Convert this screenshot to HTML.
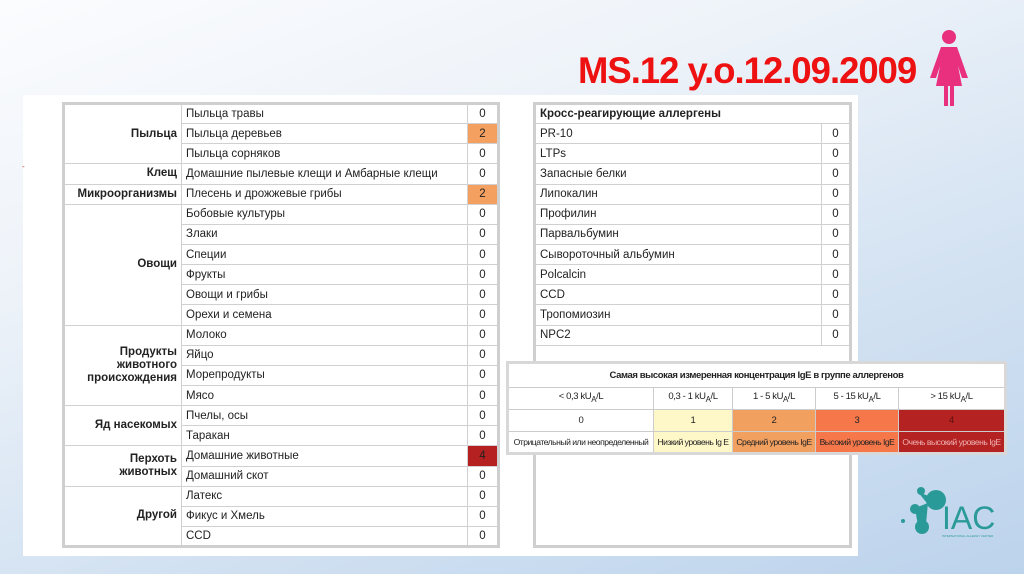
<!DOCTYPE html>
<html><head><meta charset="utf-8"><style>
*{margin:0;padding:0;box-sizing:border-box}
body{width:1024px;height:574px;overflow:hidden;position:relative;font-family:"Liberation Sans",sans-serif;background:linear-gradient(160deg,#fbfcfe 0%,#eef3f9 30%,#d3e2f2 65%,#bcd3ec 100%)}
.panel{position:absolute;left:23px;top:95px;width:835px;height:461px;background:#fff}
.title{position:absolute;left:578px;top:50px;font-weight:bold;font-size:37px;color:#ee1111;letter-spacing:-1px;transform:scaleX(0.985);transform-origin:left top;white-space:nowrap}
table{border-collapse:collapse;position:absolute;font-size:11.5px;color:#222}
td{border:1px solid #d0d0d0;height:20.15px;padding:0 4px;white-space:nowrap;line-height:18px}
.L{left:62px;top:102px;border:3px solid #cfcfcf}
.c{text-align:right;font-weight:bold;line-height:13px}
.v{text-align:center}
.o{background:#f4a060}
.r{background:#b52020}
.R{left:533px;top:102px;border:3px solid #cfcfcf}
.G{left:506px;top:361px;width:500px;table-layout:fixed;border:3px solid #d8d8d8;font-size:9.5px;letter-spacing:-0.4px}
.G td{text-align:center;height:22px;padding:0;border-color:#ccc;overflow:hidden}
.G tr:last-child td{font-size:8.6px;letter-spacing:-0.5px}
</style></head><body>
<div class="panel"></div>
<div style="position:absolute;left:22px;top:162px;color:#c33;font-size:8px">-</div>
<div class="title">MS.12 y.o.12.09.2009</div>
<svg style="position:absolute;left:928px;top:28px" width="42" height="80" viewBox="0 0 42 80">
<circle cx="21" cy="9" r="7" fill="#e8307f"/>
<path d="M13 19 H29 L40 50 H34 L30 38 L34 58 H26 V78 H22 V58 H20 V78 H16 V58 H8 L12 38 L8 50 H2 Z" fill="#e8307f"/>
</svg>
<table class="L">
<colgroup><col style="width:118px"><col style="width:286px"><col style="width:31px"></colgroup>
<tr><td rowspan="3" class="c">Пыльца</td><td>Пыльца травы</td><td class="v">0</td></tr>
<tr><td>Пыльца деревьев</td><td class="v o">2</td></tr>
<tr><td>Пыльца сорняков</td><td class="v">0</td></tr>
<tr><td class="c">Клещ</td><td>Домашние пылевые клещи и Амбарные клещи</td><td class="v">0</td></tr>
<tr><td class="c">Микроорганизмы</td><td>Плесень и дрожжевые грибы</td><td class="v o">2</td></tr>
<tr><td rowspan="6" class="c">Овощи</td><td>Бобовые культуры</td><td class="v">0</td></tr>
<tr><td>Злаки</td><td class="v">0</td></tr>
<tr><td>Специи</td><td class="v">0</td></tr>
<tr><td>Фрукты</td><td class="v">0</td></tr>
<tr><td>Овощи и грибы</td><td class="v">0</td></tr>
<tr><td>Орехи и семена</td><td class="v">0</td></tr>
<tr><td rowspan="4" class="c">Продукты<br>животного<br>происхождения</td><td>Молоко</td><td class="v">0</td></tr>
<tr><td>Яйцо</td><td class="v">0</td></tr>
<tr><td>Морепродукты</td><td class="v">0</td></tr>
<tr><td>Мясо</td><td class="v">0</td></tr>
<tr><td rowspan="2" class="c">Яд насекомых</td><td>Пчелы, осы</td><td class="v">0</td></tr>
<tr><td>Таракан</td><td class="v">0</td></tr>
<tr><td rowspan="2" class="c">Перхоть<br>животных</td><td>Домашние животные</td><td class="v r">4</td></tr>
<tr><td>Домашний скот</td><td class="v">0</td></tr>
<tr><td rowspan="3" class="c">Другой</td><td>Латекс</td><td class="v">0</td></tr>
<tr><td>Фикус и Хмель</td><td class="v">0</td></tr>
<tr><td>CCD</td><td class="v">0</td></tr>
</table>
<table class="R">
<colgroup><col style="width:287px"><col style="width:29px"></colgroup>
<tr><td colspan="2" style="font-weight:bold">Кросс-реагирующие аллергены</td></tr>
<tr><td>PR-10</td><td class="v">0</td></tr>
<tr><td>LTPs</td><td class="v">0</td></tr>
<tr><td>Запасные белки</td><td class="v">0</td></tr>
<tr><td>Липокалин</td><td class="v">0</td></tr>
<tr><td>Профилин</td><td class="v">0</td></tr>
<tr><td>Парвальбумин</td><td class="v">0</td></tr>
<tr><td>Сывороточный альбумин</td><td class="v">0</td></tr>
<tr><td>Polcalcin</td><td class="v">0</td></tr>
<tr><td>CCD</td><td class="v">0</td></tr>
<tr><td>Тропомиозин</td><td class="v">0</td></tr>
<tr><td>NPC2</td><td class="v">0</td></tr>
<tr><td colspan="2" style="height:201px"></td></tr>
</table>
<table class="G">
<colgroup><col style="width:146px"><col style="width:79px"><col style="width:83px"><col style="width:83px"><col style="width:107px"></colgroup>
<tr><td colspan="5" style="font-weight:bold;height:25px;background:#fff">Самая высокая измеренная концентрация IgE в группе аллергенов</td></tr>
<tr style="background:#fff"><td>&lt; 0,3 kU<sub>A</sub>/L</td><td>0,3 - 1 kU<sub>A</sub>/L</td><td>1 - 5 kU<sub>A</sub>/L</td><td>5 - 15 kU<sub>A</sub>/L</td><td>&gt; 15 kU<sub>A</sub>/L</td></tr>
<tr><td style="background:#fff">0</td><td style="background:#fef7c8">1</td><td style="background:#f2a060">2</td><td style="background:#f6784a">3</td><td style="background:#b42222;color:#5a1010">4</td></tr>
<tr><td style="background:#fff">Отрицательный или неопределенный</td><td style="background:#fef7c8">Низкий уровень Ig E</td><td style="background:#f2a060">Средний уровень IgE</td><td style="background:#f6784a">Высокий уровень IgE</td><td style="background:#b42222;color:#f0b0b0">Очень высокий уровень IgE</td></tr>
</table>
<svg style="position:absolute;left:900px;top:483px" width="110" height="60" viewBox="0 0 110 60">
<g fill="#2a9a98"><circle cx="21" cy="8" r="4"/><circle cx="36" cy="17" r="10"/><circle cx="15" cy="26" r="5"/><circle cx="22" cy="44" r="7"/><circle cx="3" cy="38" r="2"/>
<path d="M18 9 L34 15 L30 24 Z M15 25 L28 20 L26 41 L18 43 Z"/></g>
<text x="42" y="46" font-family="Liberation Sans" font-size="32" fill="#2a9a98">IAC</text>
<text x="42" y="54" font-family="Liberation Sans" font-size="3" fill="#2a9a98">INTERNATIONAL ALLERGY CENTER</text>
</svg>
</body></html>
